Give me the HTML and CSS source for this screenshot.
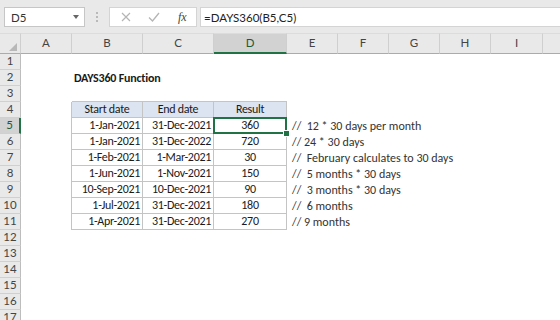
FILE: index.html
```html
<!DOCTYPE html>
<html lang="en">
<head>
  <meta charset="UTF-8" />
  <title>DAYS360 Function</title>
  <link rel="stylesheet" href="styles.css">
</head>
<body>
  <!-- formula bar -->
  <div class="formula-bar">
    <div class="name-box">
      <span>D5</span>
      <span class="drop"></span>
    </div>
    <div class="grip"><i></i><i></i><i></i></div>
    <div class="fx-box">
      <svg width="10" height="10" viewBox="0 0 10 10"><path d="M1 1 L9 9 M9 1 L1 9" stroke="#b5b5b5" stroke-width="1.2" fill="none"/></svg>
      <svg width="12" height="10" viewBox="0 0 12 10"><path d="M1 5.5 L4.5 9 L11 1" stroke="#b5b5b5" stroke-width="1.3" fill="none"/></svg>
      <span class="fx">fx</span>
    </div>
    <div class="formula">=DAYS360(B5,C5)</div>
  </div>

  <!-- worksheet -->
  <div class="sheet-wrap">
    <table class="sheet">
      <colgroup>
        <col class="w-hdr"><col class="w-a"><col class="w-b"><col class="w-c"><col class="w-d">
        <col class="w-e"><col class="w-f"><col class="w-g"><col class="w-h"><col class="w-i"><col class="w-j">
      </colgroup>
      <thead>
        <tr class="col-heads">
          <th class="corner"></th>
          <th>A</th><th>B</th><th>C</th><th class="sel">D</th><th>E</th>
          <th>F</th><th>G</th><th>H</th><th>I</th><th></th>
        </tr>
      </thead>
      <tbody>
        <tr><th>1</th><td></td><td></td><td></td><td></td><td></td><td></td><td></td><td></td><td></td><td></td></tr>
        <tr><th>2</th><td></td><td class="title">DAYS360 Function</td><td></td><td></td><td></td><td></td><td></td><td></td><td></td><td></td></tr>
        <tr><th>3</th><td></td><td class="top"></td><td class="top"></td><td class="top"></td><td></td><td></td><td></td><td></td><td></td><td></td></tr>
        <tr><th>4</th><td class="edge"></td><td class="box head">Start date</td><td class="box head">End date</td><td class="box head">Result</td><td></td><td></td><td></td><td></td><td></td><td></td></tr>
        <tr><th class="sel">5</th><td class="edge"></td><td class="box num">1-Jan-2021</td><td class="box num">31-Dec-2021</td><td class="box mid active">360</td><td class="note">//&nbsp; 12 * 30 days per month</td><td></td><td></td><td></td><td></td><td></td></tr>
        <tr><th>6</th><td class="edge"></td><td class="box num">1-Jan-2021</td><td class="box num">31-Dec-2022</td><td class="box mid">720</td><td class="note">// 24 * 30 days</td><td></td><td></td><td></td><td></td><td></td></tr>
        <tr><th>7</th><td class="edge"></td><td class="box num">1-Feb-2021</td><td class="box num">1-Mar-2021</td><td class="box mid">30</td><td class="note">//&nbsp; February calculates to 30 days</td><td></td><td></td><td></td><td></td><td></td></tr>
        <tr><th>8</th><td class="edge"></td><td class="box num">1-Jun-2021</td><td class="box num">1-Nov-2021</td><td class="box mid">150</td><td class="note">//&nbsp; 5 months * 30 days</td><td></td><td></td><td></td><td></td><td></td></tr>
        <tr><th>9</th><td class="edge"></td><td class="box num">10-Sep-2021</td><td class="box num">10-Dec-2021</td><td class="box mid">90</td><td class="note">//&nbsp; 3 months * 30 days</td><td></td><td></td><td></td><td></td><td></td></tr>
        <tr><th>10</th><td class="edge"></td><td class="box num">1-Jul-2021</td><td class="box num">31-Dec-2021</td><td class="box mid">180</td><td class="note">//&nbsp; 6 months</td><td></td><td></td><td></td><td></td><td></td></tr>
        <tr><th>11</th><td class="edge"></td><td class="box num">1-Apr-2021</td><td class="box num">31-Dec-2021</td><td class="box mid">270</td><td class="note">// 9 months</td><td></td><td></td><td></td><td></td><td></td></tr>
        <tr><th>12</th><td></td><td></td><td></td><td></td><td></td><td></td><td></td><td></td><td></td><td></td></tr>
        <tr><th>13</th><td></td><td></td><td></td><td></td><td></td><td></td><td></td><td></td><td></td><td></td></tr>
        <tr><th>14</th><td></td><td></td><td></td><td></td><td></td><td></td><td></td><td></td><td></td><td></td></tr>
        <tr><th>15</th><td></td><td></td><td></td><td></td><td></td><td></td><td></td><td></td><td></td><td></td></tr>
        <tr><th>16</th><td></td><td></td><td></td><td></td><td></td><td></td><td></td><td></td><td></td><td></td></tr>
        <tr><th>17</th><td></td><td></td><td></td><td></td><td></td><td></td><td></td><td></td><td></td><td></td></tr>
      </tbody>
    </table>
  </div>
</body>
</html>
```

FILE: styles.css
```css
/* base */
body {
  margin: 0;
  width: 560px;
  height: 320px;
  overflow: hidden;
  background: #fff;
  font-family: 'Calibri', 'Carlito', 'Lato', sans-serif;
  color: #1a1a1a;
}

/* formula bar */
.formula-bar {
  display: flex;
  align-items: stretch;
  height: 33px;
  box-sizing: border-box;
  padding: 7px 0 6px 4px;
  background: #e9e9e9;
}
.name-box {
  width: 81px;
  box-sizing: border-box;
  background: #fff;
  border: 1px solid #c6c6c6;
  display: flex;
  align-items: center;
  justify-content: space-between;
  padding: 0 5px 0 6px;
  font-family: 'Lato', sans-serif;
  font-size: 11.5px;
  color: #333;
}
.drop {
  width: 0;
  height: 0;
  border-left: 3.5px solid transparent;
  border-right: 3.5px solid transparent;
  border-top: 4px solid #666;
}
.grip {
  width: 24px;
  display: flex;
  flex-direction: column;
  align-items: center;
  justify-content: center;
  gap: 2px;
}
.grip i {
  width: 2px;
  height: 2px;
  background: #b9b9b9;
}
.fx-box {
  width: 88px;
  box-sizing: border-box;
  background: #fff;
  border: 1px solid #d4d4d4;
  display: flex;
  align-items: center;
  gap: 17px;
  padding-left: 11px;
}
.fx {
  font-family: 'Liberation Serif', serif;
  font-style: italic;
  font-size: 12px;
  color: #444;
  margin-left: 1px;
}
.formula {
  flex: 1;
  margin-left: 3px;
  background: #fff;
  border: 1px solid #d4d4d4;
  border-right: none;
  display: flex;
  align-items: center;
  padding-left: 3px;
  font-family: 'Lato', sans-serif;
  font-size: 11.5px;
  color: #222;
}

/* grid */
.sheet-wrap {
  width: 560px;
  overflow: hidden;
}
.sheet {
  table-layout: fixed;
  border-collapse: separate;
  border-spacing: 0;
  width: 613px;
  font-size: 12px;
  letter-spacing: -0.3px;
}
.w-hdr { width: 21px; }
.w-a { width: 51px; }
.w-b { width: 71px; }
.w-c { width: 71px; }
.w-d { width: 73px; }
.w-e, .w-f, .w-g, .w-h { width: 51px; }
.w-i { width: 52px; }
.w-j { width: 71px; }

.sheet th,
.sheet td {
  padding: 0 0 1px;
  line-height: 14px;
  white-space: nowrap;
  font-weight: normal;
}
.col-heads th {
  height: 17px;
  background: #e9e9e9;
  border-top: 1px solid #dcdcdc;
  border-bottom: 1px solid #ababab;
  border-right: 1px solid #cfcfcf;
  color: #444;
  font-family: 'Lato', sans-serif;
  font-size: 11.5px;
  letter-spacing: 0;
  text-align: center;
}
.col-heads th.sel {
  background: #d2d2d2;
  border-bottom: 2px solid #217346;
  color: #1f5a38;
}
.corner {
  position: relative;
}
.corner::after {
  content: '';
  position: absolute;
  right: 3px;
  bottom: 2px;
  border-left: 8px solid transparent;
  border-bottom: 8px solid #b8b8b8;
}
tbody tr {
  height: 16px;
}
.sheet tbody th {
  background: #e9e9e9;
  border-bottom: 1px solid #d0d0d0;
  border-right: 1px solid #bdbdbd;
  color: #444;
  font-family: 'Lato', sans-serif;
  font-size: 11.5px;
  letter-spacing: 0;
  text-align: center;
}
.sheet tbody th.sel {
  background: #d2d2d2;
  border-right: 2px solid #217346;
  color: #1f5a38;
}

/* cells */
.sheet .title {
  font-weight: bold;
  padding-left: 2px;
  letter-spacing: -0.2px;
}
.sheet .top {
  border-bottom: 1px solid #c4c4c4;
}
.sheet .edge {
  border-right: 1px solid #c4c4c4;
}
.sheet .box {
  border-right: 1px solid #c4c4c4;
  border-bottom: 1px solid #c4c4c4;
}
.sheet .head {
  background: #dde4f1;
  text-align: center;
}
.sheet .num {
  text-align: right;
  padding-right: 2px;
}
.sheet .mid {
  text-align: center;
}
.sheet .note {
  padding-left: 5px;
  color: #333;
  letter-spacing: 0;
}
.sheet .active {
  position: relative;
}
.sheet .active::before {
  content: '';
  position: absolute;
  left: -1px;
  top: -1px;
  right: -1px;
  bottom: -1px;
  border: 2px solid #217346;
}
.sheet .active::after {
  content: '';
  position: absolute;
  right: -4px;
  bottom: -4px;
  width: 5px;
  height: 5px;
  background: #217346;
  border: 1px solid #fff;
}
```
